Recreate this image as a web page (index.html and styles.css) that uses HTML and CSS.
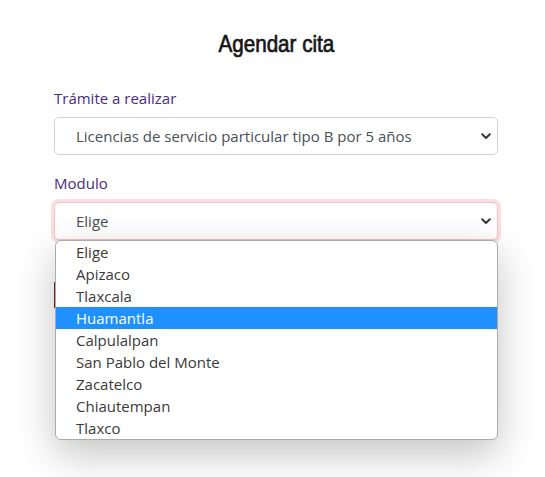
FILE: index.html
```html
<!DOCTYPE html>
<html lang="es">
<head>
<meta charset="utf-8">
<title>Agendar cita</title>
<link rel="stylesheet" href="styles.css">
</head>
<body>
<main class="form-card">
  <h1 class="title"><span class="title-text">Agendar cita</span></h1>
  <div class="field">
    <label class="label">Trámite a realizar</label>
    <div class="select">
      <span class="select-text">Licencias de servicio particular tipo B por 5 años</span>
      <svg class="chevron" width="10" height="7" viewBox="0 0 10 7"><polyline points="1.2,1.2 5,5 8.8,1.2" fill="none" stroke="#343a40" stroke-width="2" stroke-linecap="round" stroke-linejoin="round"/></svg>
    </div>
  </div>
  <div class="field field-second">
    <label class="label">Modulo</label>
    <div class="select-wrap">
      <div class="select select-focus">
        <span class="select-text">Elige</span>
        <svg class="chevron" width="10" height="7" viewBox="0 0 10 7"><polyline points="1.2,1.2 5,5 8.8,1.2" fill="none" stroke="#343a40" stroke-width="2" stroke-linecap="round" stroke-linejoin="round"/></svg>
      </div>
      <ul class="dropdown">
        <li class="option">Elige</li>
        <li class="option">Apizaco</li>
        <li class="option">Tlaxcala</li>
        <li class="option option-active">Huamantla</li>
        <li class="option">Calpulalpan</li>
        <li class="option">San Pablo del Monte</li>
        <li class="option">Zacatelco</li>
        <li class="option">Chiautempan</li>
        <li class="option">Tlaxco</li>
      </ul>
    </div>
  </div>
  <div class="btn-danger" aria-hidden="true"></div>
</main>
</body>
</html>
```
FILE: styles.css
```css
html, body {
  margin: 0;
  padding: 0;
  background: #ffffff;
}
body {
  min-height: 477px;
  font-family: "Open Sans", "Noto Sans", sans-serif;
  font-size: 15px;
  color: #495057;
}
.form-card {
  width: 444px;
  min-height: 460px;
  margin-left: 54px;
  padding-top: 29px;
  display: flex;
  flex-direction: column;
}
.title {
  margin: 0;
  font-family: "Liberation Sans", "Arial", sans-serif;
  font-size: 24px;
  line-height: 29px;
  font-weight: normal;
  color: #161616;
  text-align: center;
}
.title-text {
  display: inline-block;
  transform: scaleX(0.86);
  -webkit-text-stroke: 0.7px #161616;
}
.field {
  margin-top: 29px;
  display: flex;
  flex-direction: column;
  gap: 8px;
}
.field-second {
  margin-top: 17px;
}
.label {
  display: block;
  line-height: 22px;
  color: #4a2b82;
}
.select {
  box-sizing: border-box;
  height: 38px;
  border: 1px solid #ced4da;
  border-radius: 5px;
  display: flex;
  align-items: center;
  justify-content: space-between;
  padding: 0 4px 0 21px;
  background: #fff;
}
.select-text {
  line-height: 22px;
  color: #495057;
}
.chevron {
  display: block;
  margin-right: 2px;
}
.select-wrap {
  position: relative;
  z-index: 5;
}
.select-focus {
  border-color: #f3c0c4;
  box-shadow: 0 0 0 3px #fbdfe1;
}
.dropdown {
  position: absolute;
  top: 38px;
  left: 1px;
  right: 0;
  margin: 0;
  padding: 0;
  list-style: none;
  background: #fff;
  border: 1px solid #ababab;
  border-radius: 6px;
  box-shadow: 0 14px 40px rgba(0, 0, 0, 0.24);
  overflow: hidden;
}
.option {
  height: 22px;
  line-height: 22px;
  padding-left: 20px;
  color: #3a3a3a;
}
.option-active {
  background: #1e90ff;
  color: #ffffff;
}
.btn-danger {
  align-self: flex-start;
  margin-top: 42px;
  height: 26px;
  width: 120px;
  box-sizing: border-box;
  border-left: 1px solid #8e1f28;
  background: #f2f2f2;
}
```
